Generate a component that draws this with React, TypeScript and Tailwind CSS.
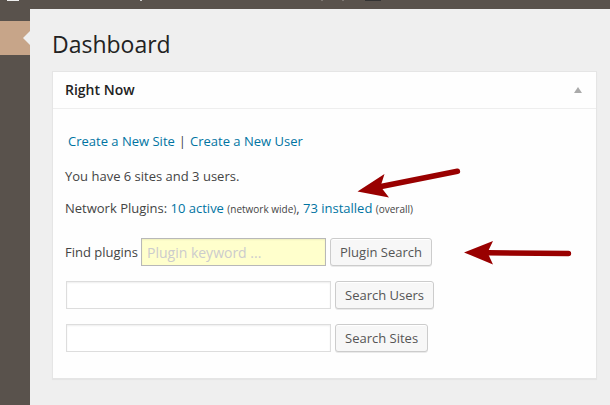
import React from "react";

function ActionButton({ children }: { children: React.ReactNode }) {
  return (
    <button
      type="submit"
      className="h-7 rounded-[3px] border border-[#cccccc] bg-[#f7f7f7] px-[9px] text-[13px] leading-[26px] text-[#555555] shadow-[inset_0_1px_0_#fff,0_1px_0_rgba(0,0,0,0.08)]"
    >
      {children}
    </button>
  );
}

function SearchRow({ label, action }: { label: string; action: string }) {
  return (
    <form className="ml-px flex items-center gap-1" onSubmit={(e) => e.preventDefault()}>
      <input
        type="text"
        aria-label={label}
        className="h-7 w-[265px] border border-[#dddddd] bg-white px-1.5 text-sm shadow-[inset_0_1px_2px_rgba(0,0,0,0.07)] outline-none"
      />
      <ActionButton>{action}</ActionButton>
    </form>
  );
}

function TopBar() {
  return (
    <header className="h-[9px] bg-[#59524c]">
      <svg className="block" width="400" height="3" aria-hidden="true">
        <rect x="7" width="12" height="1" fill="#eeeeee" />
        <rect x="140" width="2" height="1" fill="#cccccc" />
        <rect x="321" width="2" height="1" fill="#7d7772" />
        <rect x="342" width="2" height="1" fill="#7d7772" />
        <rect x="365" width="16" height="1" fill="#333333" />
      </svg>
    </header>
  );
}

function Sidebar() {
  return (
    <nav className="w-[30px] shrink-0 bg-[#59524c] pt-3" aria-label="Main menu">
      <a href="#dashboard" aria-label="Dashboard" className="flex h-[34px] items-center justify-end bg-[#c7a589]">
        <svg width="7" height="14" viewBox="0 0 7 14" aria-hidden="true">
          <path d="M7 0v14L0 7z" fill="#efefef" />
        </svg>
      </a>
    </nav>
  );
}

function Arrows() {
  return (
    <svg
      className="pointer-events-none absolute top-0 left-0"
      width="610"
      height="405"
      viewBox="0 0 610 405"
      fill="#990000"
      stroke="#990000"
      strokeLinecap="round"
      aria-hidden="true"
    >
      <path d="M357.5 191.5L384.5 174L380.5 186.5L389 197.5Z" stroke="none" />
      <path d="M381 186.5L457.4 171.3" strokeWidth="5.5" />
      <path d="M464 252.4L493 241L487.5 252.6L493 264.4Z" stroke="none" />
      <path d="M488 252.7L568.4 253.6" strokeWidth="5.5" />
    </svg>
  );
}

export default function App() {
  return (
    <div className="relative flex min-h-screen flex-col bg-[#efefef] font-['Open_Sans',sans-serif] text-[13px] leading-5 text-[#444444]">
      <TopBar />
      <div className="flex grow">
        <Sidebar />
        <main className="min-w-0 grow pt-5 pr-[13px] pl-[22px]">
          <h1 className="text-[23px] leading-[30px] text-[#222222]">Dashboard</h1>
          <section className="mt-3 border border-[#e5e5e5] bg-[#fefefe] shadow-[0_1px_1px_rgba(0,0,0,0.04)]">
            <div className="flex h-[37px] items-center justify-between border-b border-[#eeeeee] pr-3.5 pl-3">
              <h2 className="text-sm font-semibold text-[#222222]">Right Now</h2>
              <button type="button" aria-label="Toggle panel">
                <svg className="block" width="8" height="6" viewBox="0 0 8 6" aria-hidden="true">
                  <path d="M4 0L8 6H0z" fill="#aaaaaa" />
                </svg>
              </button>
            </div>
            <div className="px-3 pt-[22px] pb-[26px]">
              <div className="mb-[15px] ml-[3px] flex">
                <a href="#new-site" className="text-[#0074a2]">Create a New Site</a>
                <span className="px-1">|</span>
                <a href="#new-user" className="text-[#0074a2]">Create a New User</a>
              </div>
              <p className="mb-3">You have 6 sites and 3 users.</p>
              <p className="mb-[19px]">
                Network Plugins: <a href="#active" className="text-[#0074a2]">10 active</a>{" "}
                <small className="text-[10px]">(network wide)</small>,{" "}
                <a href="#installed" className="text-[#0074a2]">73 installed</a>{" "}
                <small className="text-[10px]">(overall)</small>
              </p>
              <div className="flex flex-col gap-[15px]">
                <form className="flex items-center gap-1" onSubmit={(e) => e.preventDefault()}>
                  <label htmlFor="plugin-search" className="w-[72px] shrink-0 whitespace-nowrap">Find plugins</label>
                  <input
                    id="plugin-search"
                    type="text"
                    placeholder="Plugin keyword ..."
                    className="h-7 w-[185px] border border-[#b8b8b8] bg-[#ffffcc] px-[5px] text-sm shadow-[inset_0_1px_2px_rgba(0,0,0,0.07)] outline-none placeholder:text-[#cccccc]"
                  />
                  <ActionButton>Plugin Search</ActionButton>
                </form>
                <SearchRow label="Search users" action="Search Users" />
                <SearchRow label="Search sites" action="Search Sites" />
              </div>
            </div>
          </section>
        </main>
      </div>
      <Arrows />
    </div>
  );
}
